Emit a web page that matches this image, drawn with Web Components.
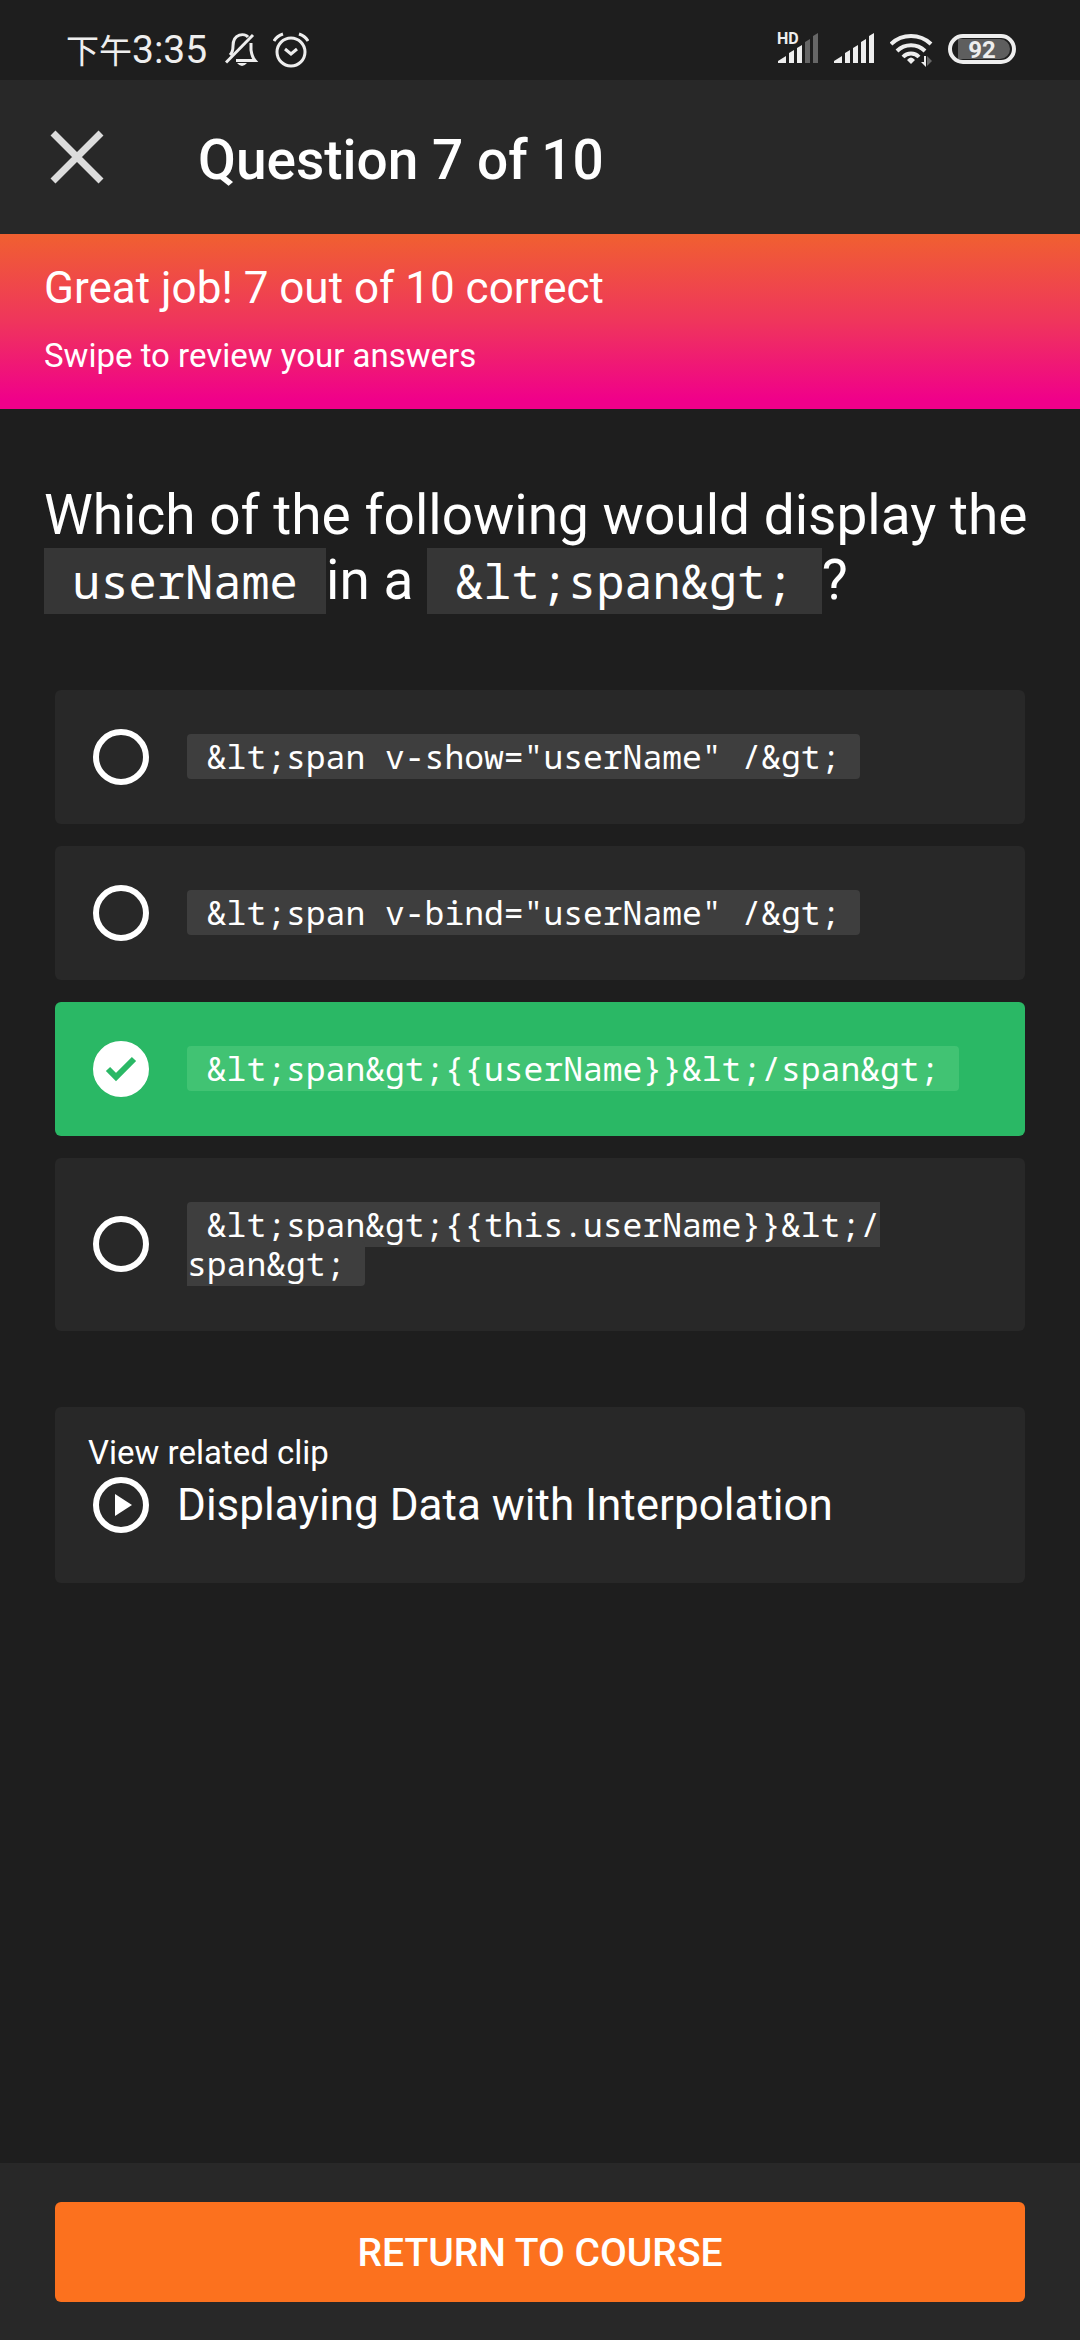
<!DOCTYPE html>
<html lang="en">
<head>
<meta charset="utf-8">
<meta name="viewport" content="width=device-width, initial-scale=1">
<title>Question 7 of 10</title>
<style>
html, body { margin: 0; background: #1e1e1e; }
body { font-family: Roboto, "Noto Sans CJK SC", sans-serif; color: #fff; }
</style>
</head>
<body>
<quiz-page>
  <status-bar slot="top"></status-bar>
  <app-header slot="top">Question 7 of 10</app-header>
  <result-banner slot="top">
    <span slot="title">Great job! 7 out of 10 correct</span>
    <span slot="hint">Swipe to review your answers</span>
  </result-banner>
  <quiz-question>Which of the following would display the <code-chip large>userName</code-chip>in a <code-chip large>&amp;lt;span&amp;gt;</code-chip>?</quiz-question>
  <answer-list>
    <answer-option><code-chip>&amp;lt;span v-show="userName" /&amp;gt;</code-chip></answer-option>
    <answer-option><code-chip>&amp;lt;span v-bind="userName" /&amp;gt;</code-chip></answer-option>
    <answer-option correct><code-chip>&amp;lt;span&amp;gt;{{userName}}&amp;lt;/span&amp;gt;</code-chip></answer-option>
    <answer-option><code-chip>&amp;lt;span&amp;gt;{{this.userName}}&amp;lt;/<wbr>span&amp;gt;</code-chip></answer-option>
  </answer-list>
  <related-clip>
    <span slot="label">View related clip</span>
    Displaying Data with Interpolation
  </related-clip>
  <bottom-bar slot="bottom">RETURN TO COURSE</bottom-bar>
</quiz-page>

<script>
const define = (name, html, setup) => {
  const template = document.createElement('template');
  template.innerHTML = html;
  customElements.define(name, class extends HTMLElement {
    constructor() {
      super();
      this.attachShadow({ mode: 'open' }).append(template.content.cloneNode(true));
    }
    connectedCallback() {
      if (setup) setup(this, this.shadowRoot);
    }
  });
};

define('quiz-page', `
<style>
  :host { display: flex; flex-direction: column; min-height: 100vh; }
  main { flex: 1; padding: 74px 55px 40px; }
</style>
<slot name="top"></slot>
<main><slot></slot></main>
<slot name="bottom"></slot>`);

define('status-bar', `
<style>
  :host { display: flex; justify-content: space-between; align-items: center; box-sizing: border-box;
    height: 80px; padding: 20px 64px 0 66px; color: #eee; }
  div { display: flex; align-items: center; gap: 14px; }
  .time { display: block; font-size: 39px; line-height: 40px; margin-right: 4px; padding-top: 2px; }
  .time span { font-size: 33px; }
  svg { display: block; }
  .hd { font: 700 16px/16px Roboto, sans-serif; }
  .level { font: 700 24px Roboto, sans-serif; }
</style>
<div>
  <div class="time"><span lang="zh">下午</span>3:35</div>
  <svg width="34" height="36" viewBox="0 0 34 36" fill="none" stroke="#eee" stroke-width="3">
    <path d="M5 23 Q8 20 8 14 C8 1 20 1 23 5 M26 11 V18 Q27 25 30 28.5 H11"/>
    <path d="M1 30.5 L28 3"/>
    <path fill="#eee" stroke="none" d="M12 31 H22 Q17 37 12 31Z"/>
  </svg>
  <svg width="36" height="36" viewBox="0 0 36 36" fill="none" stroke="#eee" stroke-width="3">
    <circle cx="18" cy="20" r="14"/>
    <path d="M12 17 L18 22 L24 17 M1 9 Q4 4 10 2 M35 9 Q32 4 26 2"/>
  </svg>
</div>
<div>
  <svg width="43" height="44" viewBox="0 -4 43 44" fill="#eee">
    <text class="hd" x="0" y="12">HD</text>
    <path d="M1 31 V29 L9 24 V31Z M12 21 L17 18 V31 H12Z M20 16 L25 13 V31 H20Z"/>
    <path fill="#666" d="M28 10 L33 7 V31 H28Z M36 4 L41 1 V31 H36Z"/>
  </svg>
  <svg width="42" height="36" viewBox="0 0 42 36" fill="#eee">
    <path d="M0 31 V29 L8 24 V31Z M11 21 L16 18 V31 H11Z M19 16 L24 13 V31 H19Z M27 10 L32 7 V31 H27Z M35 4 L40 1 V31 H35Z"/>
  </svg>
  <svg width="44" height="36" viewBox="0 0 44 36" fill="none" stroke="#eee" stroke-width="4">
    <path d="M1 12 A29 29 0 0 1 41 12 M7 19 A20 20 0 0 1 35 19 M13 25 A11 11 0 0 1 29 25"/>
    <path fill="#eee" stroke="none" d="M21 32 L17 28 Q21 23 25 28Z M34 24 H36 V35 L31 30 H34Z"/>
    <path fill="#666" stroke="none" d="M37 34 V24 L42 29Z"/>
  </svg>
  <svg width="68" height="36" viewBox="0 0 68 36">
    <rect x="2" y="4" width="64" height="26" rx="13" fill="none" stroke="#eee" stroke-width="4"/>
    <path fill="#5e5e5e" d="M10 7 H52 A10 10 0 0 1 52 27 H10Z"/>
    <text class="level" x="34" y="26" text-anchor="middle" fill="#eee">92</text>
  </svg>
</div>`);

define('app-header', `
<style>
  :host { display: flex; align-items: center; height: 154px; background: #282828; }
  button { margin: 0 0 0 44px; padding: 0; border: 0; background: none; width: 66px; height: 66px; display: grid; place-items: center; }
  h1 { margin: 0 0 0 88px; padding-top: 6px; font-size: 55px; line-height: 64px; font-weight: 500; }
</style>
<button type="button" aria-label="Close">
  <svg width="54" height="54" viewBox="0 0 54 54" stroke="#dcdcdc" stroke-width="7"><path d="M3 3 L51 51 M51 3 L3 51"/></svg>
</button>
<h1><slot></slot></h1>`);

define('result-banner', `
<style>
  :host { display: flex; flex-direction: column; gap: 22px; box-sizing: border-box; height: 175px; padding: 28px 44px 0;
    background: linear-gradient(#f06030, #ef355c 50%, #f0008a 95%); }
  .title { font-size: 44px; line-height: 52px; }
  .hint { font-size: 33px; line-height: 40px; }
</style>
<div class="title"><slot name="title"></slot></div>
<div class="hint"><slot name="hint"></slot></div>`);

define('quiz-question', `
<style>
  :host { display: block; margin: 0 -11px 77px; font-size: 55px; line-height: 64px; }
</style>
<slot></slot>`);

define('code-chip', `
<style>
  :host { font-family: "Noto Sans Mono", "DejaVu Sans Mono", monospace; font-size: 33px; word-break: keep-all;
    background: var(--chip, #3e3e3e); border-radius: 4px; }
  :host([large]) { font-size: 47px; padding: 1px 0; border-radius: 0; background: #363636; }
</style>&nbsp;<slot></slot>&nbsp;`);

define('answer-list', `
<style>:host { display: flex; flex-direction: column; gap: 22px; }</style>
<slot></slot>`);

define('answer-option', `
<style>
  :host { display: block; background: #282828; border-radius: 6px;
    font: 33px/39px "Noto Sans Mono", "DejaVu Sans Mono", monospace; }
  :host([correct]) { background: #2ab865; --chip: #41c373; }
  label { display: flex; align-items: center; gap: 38px; padding: 47px 38px 48px; }
  .mark { display: grid; flex: none; margin: -9px 0; }
  .mark > * { grid-area: 1 / 1; width: 56px; height: 56px; }
  input { appearance: none; box-sizing: border-box; margin: 0; border: 6px solid #fff; border-radius: 50%; }
  input:checked { background: #fff; }
  svg { display: none; pointer-events: none; }
  input:checked + svg { display: block; }
</style>
<label>
  <span class="mark">
    <input type="radio" name="answer">
    <svg viewBox="0 0 56 56" fill="none" stroke="#2ab865" stroke-width="6"><path d="M15 28 L23 36 L41 18"/></svg>
  </span>
  <span><slot></slot></span>
</label>`, (host, root) => {
  const input = root.querySelector('input');
  input.checked = host.hasAttribute('correct');
  input.addEventListener('change', () => {
    for (const other of host.parentElement.children) {
      if (other !== host) other.shadowRoot.querySelector('input').checked = false;
    }
  });
});

define('related-clip', `
<style>
  :host { display: block; margin-top: 76px; background: #282828; border-radius: 6px; }
  a { display: block; color: inherit; text-decoration: none; padding: 26px 33px 46px; }
  .label { font-size: 33px; line-height: 40px; }
  .row { display: flex; align-items: center; gap: 28px; padding: 4px 5px; font-size: 44px; line-height: 52px; }
  svg { flex: none; }
</style>
<a href="#clip">
  <div class="label"><slot name="label"></slot></div>
  <div class="row">
    <svg width="56" height="56" viewBox="0 0 56 56"><circle cx="28" cy="28" r="25" fill="none" stroke="#fff" stroke-width="6"/><path fill="#fff" d="M22 17 L39 28 L22 39Z"/></svg>
    <span><slot></slot></span>
  </div>
</a>`);

define('bottom-bar', `
<style>
  :host { display: block; background: #282828; padding: 39px 55px 38px; }
  button { display: block; width: 100%; height: 100px; padding: 2px 0 0; border: 0; border-radius: 6px; background: #fc711e;
    color: #fff; font: 500 39px/46px Roboto, sans-serif; }
</style>
<button type="button"><slot></slot></button>`);
</script>
</body>
</html>
